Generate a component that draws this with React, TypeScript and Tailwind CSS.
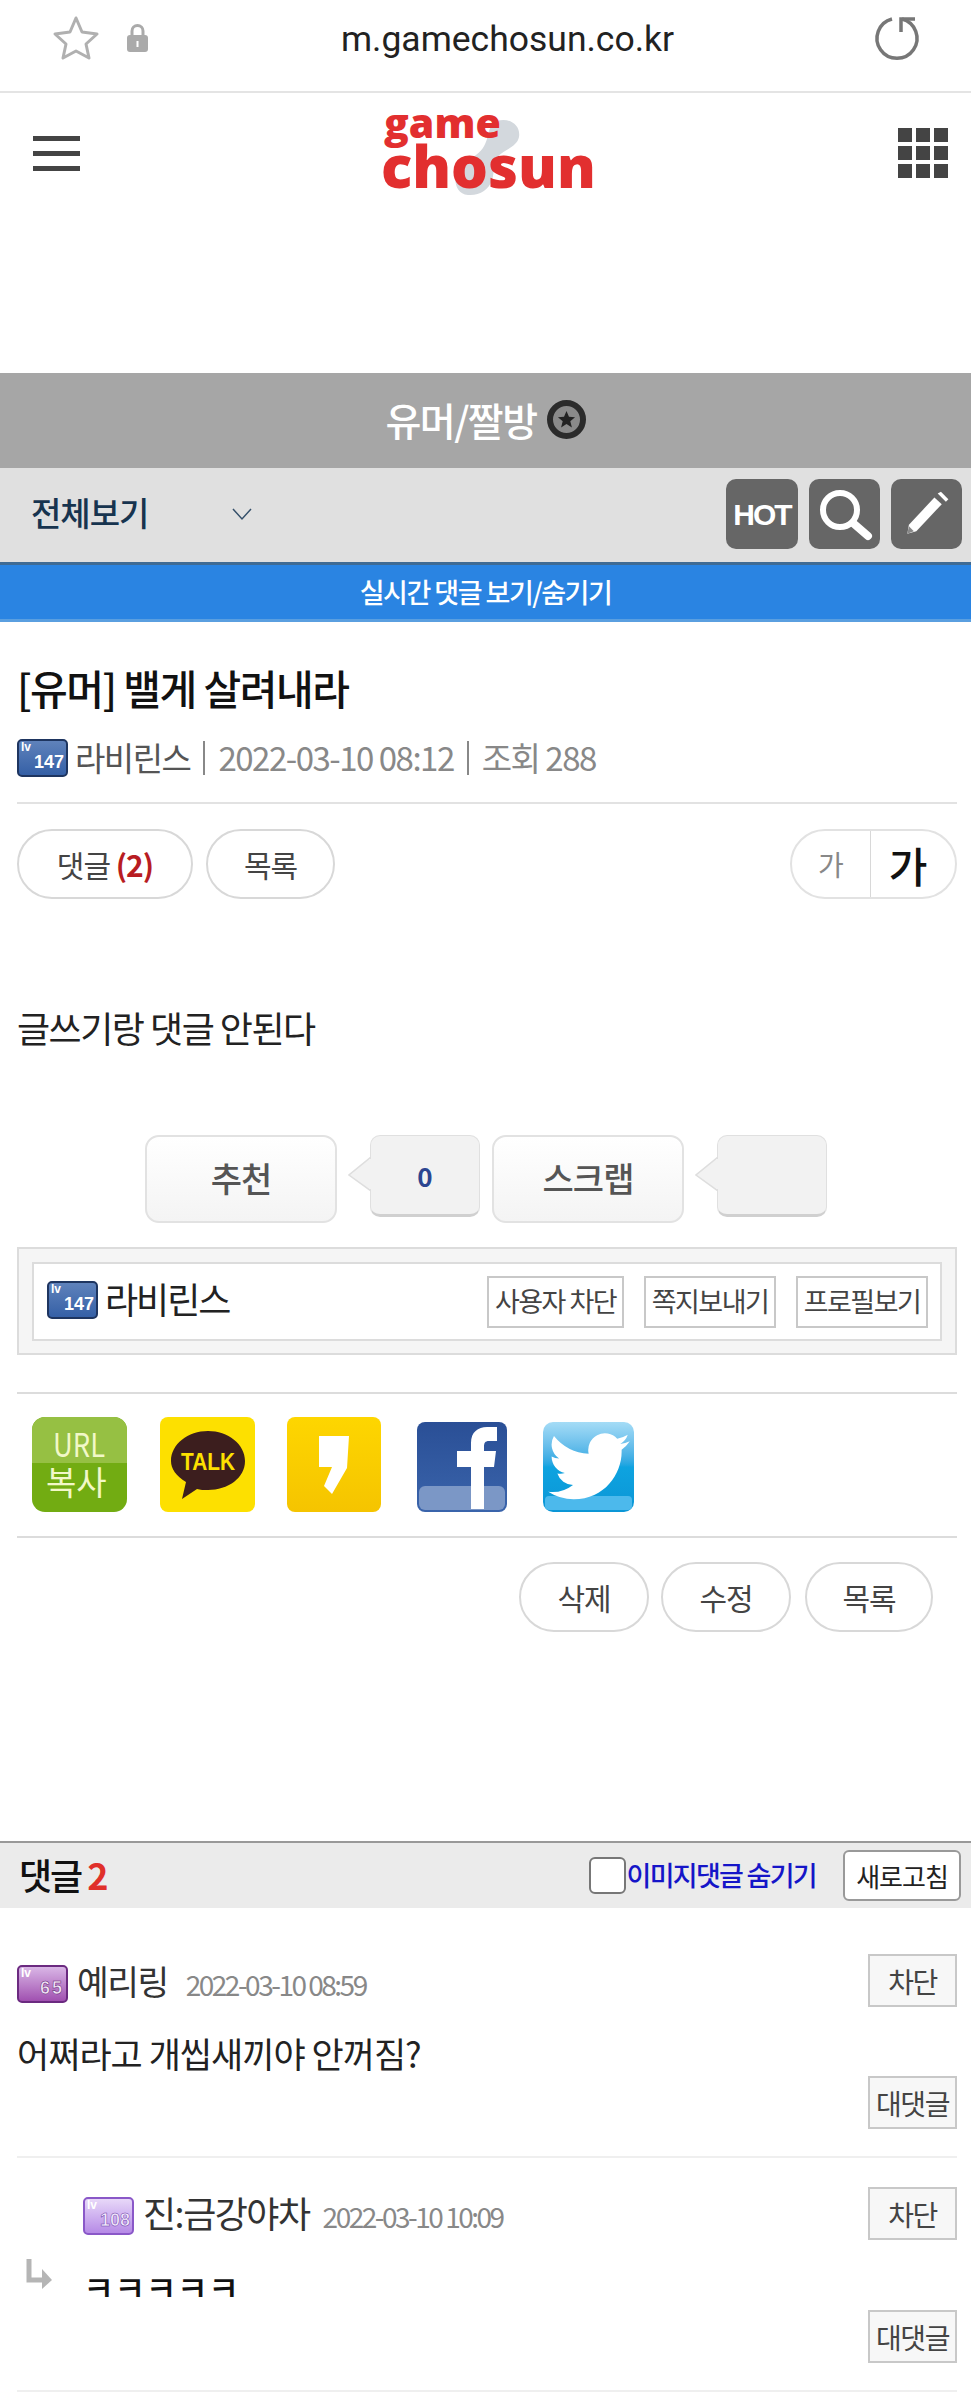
function LevelBadge({ level, tone }: { level: string; tone: "blue" | "purple" | "violet" }) {
  const tones = {
    blue: "border-[#1e3560] from-[#5f82bb] to-[#3560a6]",
    purple: "border-[#6b2a80] from-[#d9b6e6] to-[#a050b0]",
    violet: "border-[#8a58c8] from-[#e8d8f8] to-[#b68ae6]",
  };
  const digits = {
    blue: "text-white",
    purple: "tracking-[2px] text-[#f3e6f7] [-webkit-text-stroke:0.5px_#5a2070]",
    violet: "text-[#f3eafc] [-webkit-text-stroke:0.5px_#6a3aa8]",
  };
  return (
    <span
      className={`flex h-[38px] w-[51px] flex-none flex-col rounded-[5px] border-2 bg-gradient-to-b px-[2px] font-['Liberation_Sans',sans-serif] leading-none text-white ${tones[tone]}`}
    >
      <span className="text-[12px] font-bold leading-[13px]">lv</span>
      <span className={`mt-[-1px] self-end text-[18px] font-bold leading-[18px] ${digits[tone]}`}>{level}</span>
    </span>
  );
}

function PillButton({ children, className = "" }: { children: React.ReactNode; className?: string }) {
  return (
    <button
      className={`flex h-[70px] items-center justify-center rounded-[35px] border-2 border-[#d8d8d8] bg-white text-[30px] tracking-[-1px] text-[#444] ${className}`}
    >
      {children}
    </button>
  );
}

function VoteButton({ label }: { label: string }) {
  return (
    <button className="flex h-[88px] w-[192px] flex-none items-center justify-center rounded-[14px] border-2 border-[#e2e2e2] bg-gradient-to-b from-white to-[#f4f4f4] pb-[3px] text-[34px] font-medium tracking-[-1px] text-[#555]">
      {label}
    </button>
  );
}

function VoteCount({ value }: { value?: string }) {
  return (
    <div className="relative ml-[33px] flex h-[82px] w-[110px] flex-none items-center justify-center rounded-[10px] border border-[#e0e0e0] border-b-[3px] border-b-[#d0d0d0] bg-[#f2f2f2] text-[26px] font-bold text-[#2c4590]">
      <svg className="absolute left-[-23px] top-[21px]" width="23" height="34" viewBox="0 0 23 34">
        <polygon points="23,0 1,18 23,34" fill="#f2f2f2" stroke="#dedede" strokeWidth="1.5" />
        <rect x="21" y="2" width="3" height="30" fill="#f2f2f2" />
      </svg>
      {value}
    </div>
  );
}

function SquareButton({ children, className = "" }: { children: React.ReactNode; className?: string }) {
  return (
    <button
      className={`flex items-center justify-center border-2 border-[#c8c8c8] tracking-[-1.5px] text-[#444] ${className}`}
    >
      {children}
    </button>
  );
}

function CommentButton({ label }: { label: string }) {
  return (
    <SquareButton className="h-[53px] w-[89px] flex-none bg-[#f7f7f7] text-[28px]">{label}</SquareButton>
  );
}

export default function App() {
  return (
    <div className="h-[2393px] w-[971px] overflow-hidden bg-white font-['Noto_Sans_CJK_KR','Noto_Sans',sans-serif]">
      {/* browser bar */}
      <div className="relative flex h-[93px] items-center justify-center border-b-2 border-[#e4e4e4] pb-[12px] pl-[44px]">
        <svg className="absolute left-[52px] top-[15px]" width="48" height="46" viewBox="0 0 48 46">
          <polygon
            points="24,3 30,17 45,19 34,29 37,43 24,36 11,43 14,29 3,19 18,17"
            fill="none"
            stroke="#b0b0b0"
            strokeWidth="3"
            strokeLinejoin="round"
          />
        </svg>
        <svg className="absolute left-[126px] top-[23px]" width="23" height="30" viewBox="0 0 23 30">
          <path d="M6 14V8a5.500 5.500 0 0 1 11 0v6" fill="none" stroke="#aaa" strokeWidth="3" />
          <rect x="1" y="12" width="21" height="17" rx="3" fill="#aaa" />
          <rect x="10.500" y="18" width="2" height="6" fill="#fff" />
        </svg>
        <span className="font-['Roboto',sans-serif] text-[35.500px] text-[#222]">m.gamechosun.co.kr</span>
        <svg className="absolute left-[860px] top-[5px]" width="70" height="70" viewBox="0 0 70 70">
          <path d="M32 14A20 20 0 1 0 42 14" fill="none" stroke="#777" strokeWidth="3.500" />
          <path d="M55 14H41V27" fill="none" stroke="#777" strokeWidth="3.500" />
        </svg>
      </div>

      {/* logo header */}
      <div className="relative h-[280px]">
        <div className="absolute left-[33px] top-[43px] flex w-[47px] flex-col gap-[10px]">
          <span className="h-[5px] bg-[#444]" />
          <span className="h-[5px] bg-[#444]" />
          <span className="h-[5px] bg-[#444]" />
        </div>
        <div className="absolute left-[898px] top-[35px] grid grid-cols-3 gap-[4px]">
          {Array.from({ length: 9 }).map((_, i) => (
            <span key={i} className="h-[14px] w-[14px] bg-[#444]" />
          ))}
        </div>
        <svg className="absolute left-[381px] top-0" width="240" height="130" viewBox="0 -18 240 130">
          <path
            transform="translate(74 8)"
            d="M42 2c12-4 24 4 22 16-2 10-14 12-22 20-4 5-2 14-5 23-3 10-13 16-24 15C2 75-1 64 1 56c3-9 13-15 20-20 8-6 10-12 12-20 1-6 4-12 9-14z"
            fill="#d3d8dd"
          />
          <g fontFamily="Open Sans, sans-serif" fontWeight="800" fill="#e22f2f">
            <text x="3" y="27" fontSize="41">game</text>
            <text x="0" y="77" fontSize="58">chosun</text>
          </g>
        </svg>
      </div>

      {/* board title */}
      <div className="flex h-[95px] items-center justify-center gap-[10px] bg-[#a6a6a6] pb-[2px] text-[39px] font-medium tracking-[-1.5px] text-white">
        유머/짤방
        <span className="flex h-[39px] w-[39px] items-center justify-center rounded-full border-[6px] border-[#2b2b2b] bg-[#8a8a8a]">
          <svg width="19" height="19" viewBox="0 0 20 20">
            <polygon points="10,1 12.600,7.200 19,7.600 14,11.800 15.700,18.500 10,14.800 4.300,18.500 6,11.800 1,7.600 7.400,7.200" fill="#222" />
          </svg>
        </span>
      </div>

      {/* category bar */}
      <div className="flex h-[94px] items-center bg-[#e0e0e0] pb-[2px] pl-[31px] pr-[9px]">
        <span className="mb-[2px] text-[33px] font-medium tracking-[-1px] text-[#17344f]">전체보기</span>
        <svg className="ml-[84px]" width="20" height="13" viewBox="0 0 20 13">
          <path d="M1 1l9 10 9-10" fill="none" stroke="#35506a" strokeWidth="1.500" />
        </svg>
        <div className="ml-auto flex gap-[11px]">
          <button className="flex h-[70px] w-[72px] items-center justify-center rounded-[10px] bg-[#666] font-['Liberation_Sans',sans-serif] text-[30px] font-bold tracking-[-2px] text-white">
            HOT
          </button>
          <button className="flex h-[70px] w-[71px] items-center justify-center rounded-[10px] bg-[#666]">
            <svg width="58" height="54" viewBox="0 0 58 54">
              <circle cx="24" cy="23" r="17" fill="none" stroke="#fff" strokeWidth="6" />
              <path d="M37 36l15 13" stroke="#fff" strokeWidth="8" strokeLinecap="round" />
            </svg>
          </button>
          <button className="flex h-[70px] w-[71px] items-center justify-center rounded-[10px] bg-[#666]">
            <svg width="46" height="46" viewBox="0 0 56 56">
              <polygon points="4,52 6,41 37,8 46,16 15,49" fill="#fff" />
              <polygon points="41,3 45,1 54,10 51,13" fill="#fff" />
              <polygon points="4,52 6,43 12,49" fill="#888" />
            </svg>
          </button>
        </div>
      </div>

      {/* realtime strip */}
      <div className="flex h-[60px] items-center justify-center border-y-[3px] border-t-[#3f6b94] border-b-[#5a9fe0] bg-[#2a84e2] text-[27px] font-medium tracking-[-1.5px] text-white">
        실시간 댓글 보기/숨기기
      </div>

      {/* article */}
      <div className="pl-[17px] pr-[14px]">
        <h1 className="mt-[38px] text-[41px] font-medium leading-[54px] tracking-[-1.5px] text-[#111]">
          [유머] 밸게 살려내라
        </h1>
        <div className="mt-[22px] flex h-[44px] items-center text-[#888]">
          <LevelBadge level="147" tone="blue" />
          <span className="ml-[7px] text-[33px] tracking-[-1.5px] text-[#555]">라비린스</span>
          <span className="mx-[13px] h-[34px] w-[2px] bg-[#888]" />
          <span className="text-[33px] tracking-[-1.5px]">2022-03-10 08:12</span>
          <span className="mx-[13px] h-[34px] w-[2px] bg-[#888]" />
          <span className="text-[33px] tracking-[-1.5px]">조회 288</span>
        </div>
        <div className="mt-[22px] h-[2px] bg-[#e2e2e2]" />

        <div className="mt-[25px] flex items-center">
          <PillButton className="w-[176px]">
            댓글&nbsp;<b className="text-[#b81c22]">(2)</b>
          </PillButton>
          <PillButton className="ml-[13px] w-[129px]">목록</PillButton>
          <div className="ml-auto flex h-[70px] w-[167px] overflow-hidden rounded-[35px] border-2 border-[#e2e2e2]">
            <span className="flex w-[79px] items-center justify-center border-r border-[#d8d8d8] text-[28px] text-[#888]">가</span>
            <span className="flex flex-1 items-center justify-center pr-[10px] text-[42px] font-medium text-[#111]">가</span>
          </div>
        </div>

        <p className="mt-[101px] text-[36px] leading-[54px] tracking-[-1.5px] text-[#222]">글쓰기랑 댓글 안된다</p>

        <div className="ml-[128px] mt-[81px] flex items-start">
          <VoteButton label="추천" />
          <VoteCount value="0" />
          <div className="w-[12px] flex-none" />
          <VoteButton label="스크랩" />
          <VoteCount />
        </div>

        {/* author box */}
        <div className="mt-[24px] border-2 border-[#dcdcdc] bg-[#f5f5f5] px-[13px] pb-[12px] pt-[13px]">
          <div className="flex h-[79px] items-center border-2 border-[#dcdcdc] bg-white pl-[13px] pr-[12px]">
            <span className="mb-[3px]">
              <LevelBadge level="147" tone="blue" />
            </span>
            <span className="mb-[7px] ml-[7px] text-[36px] leading-[40px] tracking-[-2px] text-[#222]">라비린스</span>
            <div className="ml-auto flex gap-[20px]">
              <SquareButton className="h-[52px] w-[137px] bg-white text-[27px]">사용자 차단</SquareButton>
              <SquareButton className="h-[52px] w-[132px] bg-white text-[27px]">쪽지보내기</SquareButton>
              <SquareButton className="h-[52px] w-[132px] bg-white text-[27px]">프로필보기</SquareButton>
            </div>
          </div>
        </div>

        <div className="mt-[37px] h-[2px] bg-[#dcdcdc]" />

        {/* share icons */}
        <div className="mt-[23px] flex h-[95px] items-end pl-[15px]">
          <svg className="flex-none rounded-[13px] bg-[#72ac12]" width="95" height="95" viewBox="0 0 95 95">
            <rect width="95" height="46" fill="#96c043" />
            <g fill="#f2f8c8" fontFamily="Noto Sans CJK KR, sans-serif">
              <text x="21" y="40" fontSize="33" textLength="52" lengthAdjust="spacingAndGlyphs">URL</text>
              <text x="14" y="78" fontSize="33">복사</text>
            </g>
          </svg>
          <div className="ml-[33px] flex h-[95px] w-[95px] flex-none items-center justify-center rounded-[8px] bg-[#fde000]">
            <svg width="76" height="70" viewBox="0 0 76 70">
              <path d="M38 1c20 0 37 13 37 30S58 60 38 60c-4 0-8 0-11 -1L12 69l4-17C6 46 1 39 1 31 1 14 18 1 38 1z" fill="#3c1e1e" />
              <text x="11" y="40" fontSize="24" fontWeight="700" fill="#fde000" fontFamily="Liberation Sans, sans-serif" textLength="54" lengthAdjust="spacingAndGlyphs">TALK</text>
            </svg>
          </div>
          <div className="ml-[32px] flex h-[95px] w-[94px] flex-none items-center justify-center rounded-[8px] bg-gradient-to-b from-[#fed600] to-[#f5c400]">
            <svg width="30" height="58" viewBox="0 0 30 58">
              <path d="M0 0H30L28 32 13 58 5 50 13 31H0z" fill="#fff" />
            </svg>
          </div>
          <div className="relative ml-[36px] flex h-[90px] w-[90px] flex-none items-end justify-end overflow-hidden rounded-[8px] bg-gradient-to-b from-[#2a4f96] to-[#3a64ab]">
            <span className="absolute inset-x-[2px] bottom-[2px] h-[24px] rounded-[6px] bg-[#7b97c6]" />
            <svg className="relative mb-[3px] mr-[10px]" width="40" height="82" viewBox="0 0 40 82">
              <path d="M14 82V40H0V24H14V16C14 5 21 0 30 0H40V14H32C28 14 27 16 27 20V24H39L37 40H27V82z" fill="#fff" />
            </svg>
          </div>
          <div className="relative ml-[36px] flex h-[90px] w-[91px] flex-none items-center justify-center overflow-hidden rounded-[10px] bg-gradient-to-b from-[#a5dcf6] via-[#0ea3e0] to-[#0b96d6]">
            <span className="absolute inset-x-[2px] bottom-[2px] h-[14px] rounded-[4px] bg-[#4cb9ec]" />
            <svg className="relative" width="82" height="68" viewBox="0 0 24 20">
              <path
                d="M24 2.400a10 10 0 0 1-2.800.8 5 5 0 0 0 2.200-2.700 10 10 0 0 1-3.100 1.200A4.900 4.900 0 0 0 11.900 6.100 14 14 0 0 1 1.700.9a4.900 4.900 0 0 0 1.500 6.600A5 5 0 0 1 1 6.900c0 2.400 1.700 4.400 3.900 4.900a5 5 0 0 1-2.200.1 4.900 4.900 0 0 0 4.600 3.400A9.900 9.900 0 0 1 0 17.300 14 14 0 0 0 7.500 19.500c9.100 0 14.100-7.500 14.100-14v-.6A10 10 0 0 0 24 2.400z"
                fill="#fff"
              />
            </svg>
          </div>
        </div>

        <div className="mt-[24px] h-[2px] bg-[#dcdcdc]" />

        <div className="mt-[24px] flex justify-end gap-[12px] pr-[24px]">
          <PillButton className="w-[130px]">삭제</PillButton>
          <PillButton className="w-[130px]">수정</PillButton>
          <PillButton className="ml-[2px] w-[128px]">목록</PillButton>
        </div>
      </div>

      {/* comments */}
      <div className="mt-[209px] flex h-[67px] items-center border-t-2 border-[#999] bg-[#ebebeb] pl-[19px] pr-[10px]">
        <span className="mb-[3px] text-[36px] font-medium tracking-[-2px] text-[#111]">
          댓글 <span className="font-bold text-[#e0302a]">2</span>
        </span>
        <span className="ml-auto h-[37px] w-[37px] rounded-[6px] border-2 border-[#777] bg-white" />
        <span className="ml-[1px] text-[27px] font-medium tracking-[-1.7px] text-[#1515c8]">이미지댓글 숨기기</span>
        <button className="ml-[27px] h-[51px] w-[118px] rounded-[6px] border-2 border-[#999] bg-white text-[26px] tracking-[-1px] text-[#222]">
          새로고침
        </button>
      </div>

      <div className="pl-[17px] pr-[14px]">
        <div className="mt-[46px] flex items-start">
          <div className="mt-[9px] flex items-center">
            <LevelBadge level="65" tone="purple" />
            <span className="ml-[9px] mt-[-8px] text-[34.500px] leading-[44px] tracking-[-1.5px] text-[#333]">예리링</span>
            <span className="ml-[18px] text-[28px] tracking-[-2.5px] text-[#888]">2022-03-10 08:59</span>
          </div>
          <div className="ml-auto"><CommentButton label="차단" /></div>
        </div>
        <p className="mt-[24px] h-[44px] text-[35px] leading-[44px] tracking-[-1px] text-[#222]">어쩌라고 개씹새끼야 안꺼짐?</p>
        <div className="mt-[1px] flex justify-end"><CommentButton label="대댓글" /></div>
        <div className="mt-[27px] h-[2px] bg-[#efefef]" />

        <div className="mt-[29px] flex items-start pl-[66px]">
          <div className="mt-[8px] flex items-center">
            <LevelBadge level="108" tone="violet" />
            <span className="ml-[9px] mt-[-8px] text-[36px] leading-[44px] tracking-[-1.5px] text-[#333]">진:금강야차</span>
            <span className="ml-[13px] text-[28px] tracking-[-2.5px] text-[#888]">2022-03-10 10:09</span>
          </div>
          <div className="ml-auto"><CommentButton label="차단" /></div>
        </div>
        <div className="mt-[19px] flex h-[51px]">
          <svg className="ml-[9px] flex-none" width="28" height="30" viewBox="0 0 28 30">
            <path d="M3 0v21h17" fill="none" stroke="#b5b5b5" strokeWidth="5" />
            <path d="M16 10l10 11-10 9z" fill="#b5b5b5" />
          </svg>
          <p className="ml-[29px] mt-[6px] text-[34px] font-medium leading-[44px] text-[#111]">ㅋㅋㅋㅋㅋ</p>
        </div>
        <div className="flex justify-end"><CommentButton label="대댓글" /></div>
        <div className="mt-[27px] h-[2px] bg-[#efefef]" />
      </div>
    </div>
  );
}
